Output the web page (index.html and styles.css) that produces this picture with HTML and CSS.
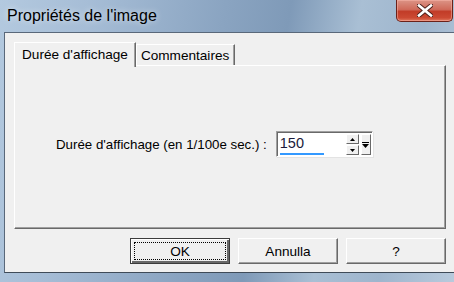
FILE: index.html
```html
<!DOCTYPE html>
<html>
<head>
    <link rel="stylesheet" href="styles.css">
</head>
<body>
    <div class="window">
        <div class="titlebar">
            <span class="title">Propriétés de l'image</span>
            <button class="close-button" title="Fermer">
                <svg width="16" height="13" viewBox="0 0 16 13">
                    <path d="M2 1.5 L14 11.5 M14 1.5 L2 11.5" stroke="#4a1e18" stroke-width="4.5" stroke-linecap="square"/>
                    <path d="M2 1.5 L14 11.5 M14 1.5 L2 11.5" stroke="#fff" stroke-width="2.6" stroke-linecap="square"/>
                </svg>
            </button>
        </div>
        <div class="client">
            <div class="tabs">
                <div class="tab active">Durée d'affichage</div>
                <div class="tab">Commentaires</div>
            </div>
            <div class="panel">
                <div class="field-row">
                    <label class="field-label">Durée d'affichage (en 1/100e sec.) :</label>
                    <div class="spin-edit">
                        <div class="spin-text">
                            <span>150</span>
                            <div class="spin-progress"></div>
                        </div>
                        <div class="spin-buttons">
                            <div class="spin-btn">
                                <svg width="5" height="3" viewBox="0 0 5 3"><path d="M2.5 0 L5 3 L0 3 Z" fill="#000"/></svg>
                            </div>
                            <div class="spin-btn">
                                <svg width="5" height="3" viewBox="0 0 5 3"><path d="M0 0 L5 0 L2.5 3 Z" fill="#000"/></svg>
                            </div>
                        </div>
                        <div class="spin-btn spin-end">
                            <svg width="7" height="6" viewBox="0 0 7 6"><path d="M0 0 H7 V1 H0 Z M0 2 H7 L3.5 6 Z" fill="#000"/></svg>
                        </div>
                    </div>
                </div>
            </div>
            <div class="button-row">
                <button class="dlg-button default"><span class="focus">OK</span></button>
                <button class="dlg-button">Annulla</button>
                <button class="dlg-button">?</button>
            </div>
        </div>
    </div>
</body>
</html>
```

FILE: styles.css
```css
* {
    box-sizing: border-box;
    margin: 0;
    padding: 0;
}

body {
    font-family: "Liberation Sans", Arial, sans-serif;
    width: 454px;
    height: 282px;
    overflow: hidden;
}

.window {
    height: 282px;
    display: flex;
    flex-direction: column;
    padding: 0 0 9px 4px;
    background: linear-gradient(100deg, #b3c9df 0%, #a6bdd6 18%, #8aa4c1 45%, #7f9ab8 58%, #a9bfd4 72%, #9eb5cd 85%, #b8cadc 100%);
}

.titlebar {
    height: 32px;
    display: flex;
    justify-content: space-between;
    align-items: flex-start;
    margin-left: -4px;
}

.title {
    font-size: 16px;
    color: #000;
    padding: 7px 0 0 7px;
    text-shadow: 0 0 6px rgba(255, 255, 255, 0.7);
}

.close-button {
    width: 57px;
    height: 22px;
    margin-right: 1px;
    border: 1px solid #6b2119;
    border-top: none;
    border-radius: 0 0 5px 5px;
    background: linear-gradient(to bottom, #dc9486 0%, #cf6a5a 45%, #c23c28 55%, #cc4a33 85%, #e07a60 100%);
    box-shadow: inset 0 0 0 1px rgba(255, 190, 180, 0.45);
    display: flex;
    align-items: center;
    justify-content: center;
}

.client {
    flex: 1;
    display: flex;
    flex-direction: column;
    background: #f0f0f0;
    border-top: 1px solid #59687a;
    border-left: 1px solid #59687a;
    border-bottom: 1px solid #3f4b58;
    padding: 9px 8px 7px 9px;
}

.tabs {
    display: flex;
    align-items: flex-end;
    height: 23px;
    position: relative;
    z-index: 1;
}

.tab {
    font-size: 13.6px;
    color: #000;
    height: 21px;
    padding: 3px 5px 0 4px;
    border-top: 1px solid #fff;
    border-left: 1px solid #fff;
    border-right: 1px solid #696969;
    box-shadow: inset -1px 0 0 #a0a0a0;
    background: #f0f0f0;
}

.tab.active {
    height: 25px;
    margin-bottom: -2px;
    padding: 4px 7px 0 7px;
}

.panel {
    height: 164px;
    border-top: 1px solid #fff;
    border-left: 1px solid #fff;
    border-right: 1px solid #696969;
    border-bottom: 1px solid #696969;
    box-shadow: inset -1px -1px 0 #a0a0a0;
    padding: 65px 0 0 41px;
}

.field-row {
    display: flex;
    align-items: center;
    gap: 9px;
}

.field-label {
    font-size: 13.3px;
    color: #000;
}

.spin-edit {
    display: flex;
    align-items: stretch;
    gap: 1px;
    height: 26px;
    background: #fff;
    border-top: 1px solid #a0a0a0;
    border-left: 1px solid #a0a0a0;
    border-right: 1px solid #fff;
    border-bottom: 1px solid #fff;
    box-shadow: inset 1px 1px 0 #696969, 1px 1px 0 #e3e3e3;
    padding: 2px 1px 1px 2px;
}

.spin-text {
    width: 66px;
    display: flex;
    flex-direction: column;
    font-size: 14.5px;
    color: #1a1a3a;
    padding: 1px 0 0 1px;
}

.spin-progress {
    width: 44px;
    height: 2px;
    margin-top: auto;
    background: #3399ff;
}

.spin-buttons {
    display: flex;
    flex-direction: column;
    gap: 1px;
    width: 13px;
}

.spin-btn {
    flex: 1;
    display: flex;
    align-items: center;
    justify-content: center;
    background: #f0f0f0;
    border-top: 1px solid #fff;
    border-left: 1px solid #fff;
    border-right: 1px solid #696969;
    border-bottom: 1px solid #696969;
}

.spin-end {
    flex: none;
    width: 10px;
    margin-left: 1px;
}

.button-row {
    display: flex;
    justify-content: flex-end;
    gap: 8px;
    margin-top: 9px;
}

.dlg-button {
    width: 100px;
    height: 26px;
    font-family: "Liberation Sans", Arial, sans-serif;
    font-size: 13.6px;
    color: #000;
    background: #f0f0f0;
    border-top: 1px solid #fff;
    border-left: 1px solid #fff;
    border-right: 1px solid #696969;
    border-bottom: 1px solid #696969;
    box-shadow: inset -1px -1px 0 #a0a0a0;
    display: flex;
    align-items: center;
    justify-content: center;
}

.dlg-button.default {
    border: 1px solid #3c3c3c;
    box-shadow: inset 1px 1px 0 #fff, inset -2px -2px 0 #696969;
    padding: 3px;
}

.focus {
    width: 100%;
    height: 100%;
    border: 1px dotted #000;
    display: flex;
    align-items: center;
    justify-content: center;
}
```
